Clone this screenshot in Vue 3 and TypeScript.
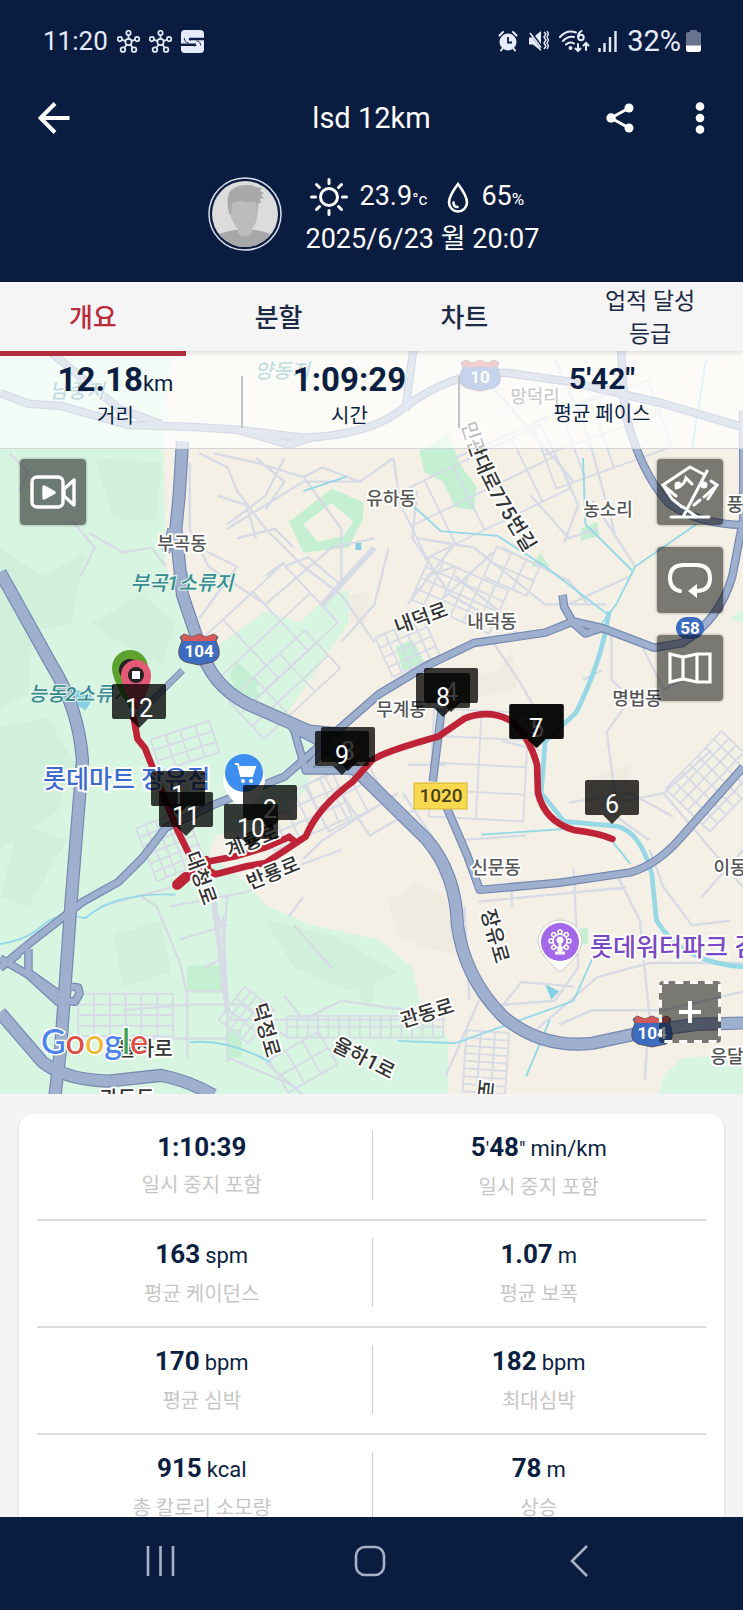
<script setup lang="ts">
import { ref } from 'vue'

interface Label { t: string; x: number; y: number; r?: number; k: string }
interface Marker { n: number; x: number; y: number }
interface Patch { x: number; y: number; w: number; h: number; a: number; c: number; r: number }
interface Metric { value: string; unit: string; label: string }

const active = ref(0)
const tabs = ['개요', '분할', '차트', '업적 달성 등급']

const rows: Metric[][] = [
  [{ value: '1:10:39', unit: '', label: '일시 중지 포함' }, { value: `5'48"`, unit: 'min/km', label: '일시 중지 포함' }],
  [{ value: '163', unit: 'spm', label: '평균 케이던스' }, { value: '1.07', unit: 'm', label: '평균 보폭' }],
  [{ value: '170', unit: 'bpm', label: '평균 심박' }, { value: '182', unit: 'bpm', label: '최대심박' }],
  [{ value: '915', unit: 'kcal', label: '총 칼로리 소모량' }, { value: '78', unit: 'm', label: '상승' }],
]

const labels: Label[] = [
  { t: '남중지', x: 77, y: 47, k: 'water' },
  { t: '양동지', x: 282, y: 27, k: 'water' },
  { t: '망덕리', x: 535, y: 52, k: 'town' },
  { t: '유하동', x: 391, y: 154, k: 'town' },
  { t: '농소리', x: 608, y: 165, k: 'town' },
  { t: '풍', x: 735, y: 160, k: 'town' },
  { t: '부곡동', x: 182, y: 199, k: 'town' },
  { t: '부곡1소류지', x: 182, y: 239, k: 'water' },
  { t: '내덕동', x: 492, y: 277, k: 'town' },
  { t: '무계동', x: 401, y: 365, k: 'town' },
  { t: '명법동', x: 637, y: 354, k: 'town' },
  { t: '능동2소류지', x: 80, y: 350, k: 'water' },
  { t: '이동', x: 730, y: 523, k: 'town' },
  { t: '신문동', x: 496, y: 523, k: 'town' },
  { t: '응달', x: 727, y: 712, k: 'town' },
  { t: '내덕로', x: 421, y: 267, r: -20, k: 'road' },
  { t: '장유로', x: 495, y: 585, r: 74, k: 'road' },
  { t: '관동로', x: 427, y: 662, r: -17, k: 'road' },
  { t: '율하1로', x: 364, y: 707, r: 27, k: 'road' },
  { t: '덕정로', x: 266, y: 679, r: 74, k: 'road' },
  { t: '율하로', x: 145, y: 698, r: 0, k: 'road' },
  { t: '계룡로', x: 252, y: 490, r: -22, k: 'road' },
  { t: '반룡로', x: 273, y: 522, r: -22, k: 'road' },
  { t: '대청로', x: 201, y: 527, r: 70, k: 'road' },
  { t: '관동동', x: 127, y: 748, r: 0, k: 'road' },
  { t: '로대', x: 484, y: 747, r: 96, k: 'road' },
]

const markers: Marker[] = [
  { n: 1, x: 151, y: 420 }, { n: 2, x: 243, y: 434 }, { n: 3, x: 321, y: 376 },
  { n: 4, x: 424, y: 317 }, { n: 5, x: 510, y: 353 }, { n: 6, x: 585, y: 429 },
  { n: 7, x: 509, y: 353 }, { n: 8, x: 416, y: 322 }, { n: 9, x: 315, y: 380 },
  { n: 10, x: 224, y: 453 }, { n: 11, x: 159, y: 441 }, { n: 12, x: 112, y: 333 },
]

const patches: Patch[] = [
  { x: 560, y: 625, w: 260, h: 170, a: -43, c: 3, r: 2 },
  { x: 600, y: 730, w: 220, h: 110, a: -43, c: 3, r: 3 },
  { x: 390, y: 860, w: 130, h: 70, a: -18, c: 4, r: 3 },
  { x: 360, y: 1070, w: 110, h: 120, a: -22, c: 5, r: 6 },
  { x: 265, y: 1430, w: 200, h: 90, a: 0, c: 6, r: 4 },
  { x: 520, y: 1430, w: 80, h: 90, a: 38, c: 5, r: 3 },
  { x: 770, y: 1455, w: 330, h: 46, a: 0, c: 15, r: 2 },
  { x: 1025, y: 1530, w: 90, h: 130, a: 4, c: 3, r: 8 },
  { x: 1510, y: 935, w: 170, h: 130, a: -46, c: 7, r: 6 },
  { x: 1020, y: 320, w: 340, h: 150, a: -26, c: 5, r: 2 },
  { x: 1270, y: 200, w: 260, h: 150, a: -20, c: 4, r: 2 },
  { x: 1010, y: 900, w: 200, h: 230, a: 3, c: 2, r: 4 },
  { x: 860, y: 650, w: 110, h: 90, a: -24, c: 5, r: 4 },
  { x: 970, y: 540, w: 180, h: 100, a: 24, c: 6, r: 4 },
  { x: 1080, y: 490, w: 100, h: 70, a: 24, c: 3, r: 2 },
  { x: 640, y: 1000, w: 180, h: 100, a: -24, c: 6, r: 3 },
  { x: 730, y: 960, w: 140, h: 110, a: -28, c: 3, r: 2 },
  { x: 640, y: 1530, w: 120, h: 80, a: -30, c: 3, r: 2 },
]

function grid(p: Patch): string {
  let d = ''
  for (let i = 0; i <= p.c; i++) {
    const x = Math.round(-p.w / 2 + (p.w * i) / p.c)
    d += `M${x} ${-p.h / 2}v${p.h}`
  }
  for (let i = 0; i <= p.r; i++) {
    const y = Math.round(-p.h / 2 + (p.h * i) / p.r)
    d += `M${-p.w / 2} ${y}h${p.w}`
  }
  return d
}

const highways = [
  'M385 215 378 330 371 400 385 540 422 650Q445 730 520 770L650 828 760 920 900 1058Q962 1130 965 1240 980 1350 1060 1432 1140 1502 1250 1490L1380 1462 1470 1450 1568 1447',
  'M0 492 110 690Q166 780 174 890L150 1190 128 1500 116 1600',
  'M0 1425 90 1530Q140 1568 230 1570L340 1558Q400 1570 450 1600',
]
const trunks = [
  'M0 1330 60 1280 175 1190 250 1148 300 1098 350 1033 450 985 600 925 720 820 800 750 900 690 1000 642 1150 620 1210 596 1270 610 1380 652 1440 642Q1520 590 1545 500L1568 380',
  'M1187 540 1190 565 1210 600M1210 600 1235 622 1270 610',
  'M0 112 60 135 130 140 270 180 400 184 500 190 640 207Q780 202 850 145 960 62 1070 70L1200 88 1400 135 1568 185',
  'M110 28 250 145 340 178M500 190 610 222 660 206',
  'M1310 20 1318 150Q1350 280 1410 345 1470 390 1568 392V150',
  'M872 20 855 150',
  'M932 780 913 935M350 450 362 400',
  'M940 985 985 1090 1012 1165 1180 1150 1330 1128Q1390 1110 1440 1050L1568 905',
  'M0 1310 60 1345 125 1405M0 1330 40 1300M60 1290 60 1340 130 1390M150 1370 165 1372 168 1385 158 1402 135 1400',
  'M610 820 720 830M620 825 645 912 760 912M645 912 690 860 620 825',
]
const streets = 'M420 240 480 270 500 320 560 400 640 480 720 540 790 640M400 260 400 400 440 480 560 560M450 240 540 260 640 290 680 270 760 300 830 250M400 430 500 480 420 590M480 400 640 300 760 300M600 250 560 330 480 390M830 250 840 320 880 360M640 290 720 400 720 520M560 560 700 440 790 420M820 440 790 560 720 640M880 320 870 420 950 540 1090 620M880 420 1000 440 1150 560 1280 560M860 560 960 430M900 580 1040 450M1060 440 1200 510 1240 560M1120 330 1200 420 1260 400M1180 260 1220 350 1190 430M1170 40 1240 200 1300 420M960 250 1300 100M1040 100 1210 300M1200 560 1330 500M1250 340 1340 480M1040 640 1100 730 1140 800M1290 620 1290 720 1330 760 1280 830 1300 980 1400 960 1500 870M1350 640 1400 740 1440 720M1200 980 1330 960 1420 1010M1300 1010 1370 1060M1370 1080 1400 1160 1460 1240 1540 1230M1400 960 1568 1160M1480 1180 1568 1080M1210 1120 1220 1330 1170 1400 1040 1410M1080 1160V1200M1010 1190 1320 1160M1300 1130 1350 1230 1370 1430 1360 1568M980 1200 990 1400M1060 1410 1100 1360 1210 1370M1110 1480 1260 1350 1370 1320 1568 1320M1180 1450 1250 1420 1400 1420 1568 1380M470 1220 480 1420V1530M470 1250 420 1110M300 1180 330 1200 380 1320 395 1390V1520M395 1380H480M260 1420 395 1408H510L610 1480M220 1480H480M480 1440H940M480 1520 620 1580M360 1200 520 1170 640 1110 720 1080M380 1270 480 1240M210 1200 360 1160M480 1180 470 1280M720 960 780 1050 900 980M640 1100 680 1060 840 960M610 1220 640 1180M860 900H940M850 960 930 1080M960 1060 1110 1050M150 380 200 440 170 500M190 410 260 450 320 440 350 480M20 240 60 280 40 320M620 1240 700 1330M940 1560 1010 1400M560 1530 640 1600M540 250 600 300 560 360M460 330 520 350 540 420M500 420 580 400 620 440M600 480 650 460 720 520M560 500 600 470M960 500 1060 580M900 500 960 480M1060 850 1140 870M1230 720 1270 700M960 1200 960 1180M600 1390 640 1440 720 1400 860 1420M430 1330 470 1310'
</script>

<template>
  <div class="app">
    <header class="head">
      <div class="status">
        <div class="side">
          <span class="clock">11:20</span>
          <svg v-for="i in 2" :key="i" class="hub" viewBox="0 0 24 24" fill="none" stroke="#e6ebfa" stroke-width="1.800">
            <circle cx="12" cy="12.500" r="3.300" /><circle cx="12" cy="3" r="2.300" /><circle cx="3" cy="9.500" r="2.300" /><circle cx="21" cy="9.500" r="2.300" /><circle cx="6.200" cy="20.500" r="2.400" /><circle cx="17.800" cy="20.500" r="2.400" />
            <path d="M12 5.300v3.900M5.200 10.200l3.700 1.200M18.800 10.200l-3.700 1.200M7.600 18.500l2.400-3.200M16.400 18.500 14 15.300" />
          </svg>
          <svg class="hub" viewBox="0 0 24 24"><rect width="24" height="24" rx="4" fill="#e6ebfa" /><path d="M24 9.500H10M0 15.500H14" stroke="#0a1d40" stroke-width="2.600" /><path d="M10 8.200 8.800 9.500 10.200 10.800M14 14.200l1.200 1.300-1.400 1.300" fill="none" stroke="#0a1d40" stroke-width="1.500" /><path d="M3.500 8.500Q3.500 13 8 13.500M20.500 16Q20.500 12 16 11.300" fill="none" stroke="#0a1d40" stroke-width="1" /></svg>
        </div>
        <div class="side right">
          <svg width="20" height="22" viewBox="0 0 20 22"><g fill="none" stroke="#e6ebfa" stroke-width="2" stroke-linecap="round"><path d="M1.500 5.500 5 2M18.500 5.500 15 2M4.500 18.500 3 20.500M15.500 18.500l1.500 2" /></g><circle cx="10" cy="12" r="8.500" fill="#e6ebfa" /><path d="M10 7v5.500h4" fill="none" stroke="#0a1d40" stroke-width="1.800" /></svg>
          <svg width="21" height="22" viewBox="0 0 21 22" fill="#e6ebfa"><path d="M1 7.500h4L13 1v20l-8-6.500H1z" /><path d="M2 1.500 14 18" stroke="#0a1d40" stroke-width="3" /><path d="m2 3 11 14.500" stroke="#e6ebfa" stroke-width="1.600" /><path d="m16 2 2 2-2 3 2 3-2 3 2 3-2 3M19 1l1.500 3L19 7l1.500 3L19 13l1.500 3L19 19" fill="none" stroke="#e6ebfa" stroke-width="1.400" /></svg>
          <svg width="31" height="23" viewBox="0 0 31 23" fill="none" stroke="#e6ebfa" stroke-width="2" stroke-linecap="round"><path d="M1 7Q8-1 17 2.500M4 11q5-5.500 11-4M7 14.500q4-3.500 8-1" /><circle cx="11.500" cy="18" r="1" fill="#e6ebfa" /><path d="M22.500 1q-3.500 2-3.500 6" /><circle cx="22" cy="7.500" r="2.700" /><path d="M19 14v7m-2.500-2.500L19 21l2.500-2.500M27 20v-7m-2.500 2.500L27 13l2.500 2.500" /></svg>
          <svg class="signal" width="19" height="22" viewBox="0 0 19 22" stroke="#e6ebfa" stroke-width="2.400"><path d="M1.500 22v-4M6.500 22v-9M12 22V7" /><path d="M17.500 22V1" /></svg>
          <span class="battery">32%</span>
          <svg class="cell" width="15" height="22" viewBox="0 0 15 22"><path d="M4 0h7v2h2q2 0 2 2v15q0 3-2.500 3h-10Q0 22 0 19V4q0-2 2-2h2z" fill="#68738e" /><path d="M0 15.500h15V19q0 3-2.500 3h-10Q0 22 0 19z" fill="#fff" /></svg>
        </div>
      </div>
      <div class="bar">
        <button class="plain" aria-label="뒤로"><svg width="32" height="32" viewBox="0 0 32 32" fill="none" stroke="#fff" stroke-width="4"><path d="M17 1.500 2.500 16 17 30.500M3 16h28.500" /></svg></button>
        <h1>lsd 12km</h1>
        <div class="tools">
          <button class="plain" aria-label="공유"><svg width="28" height="30" viewBox="0 0 28 30" fill="#fff"><path d="M23 5 5 15l18 10" fill="none" stroke="#fff" stroke-width="3" /><circle cx="23" cy="5" r="4.500" /><circle cx="5" cy="15" r="4.700" /><circle cx="23" cy="25" r="4.500" /></svg></button>
          <button class="plain" aria-label="더보기"><svg width="10" height="32" viewBox="0 0 10 32" fill="#fff"><circle cx="5" cy="4.500" r="4.300" /><circle cx="5" cy="16" r="4.300" /><circle cx="5" cy="27.500" r="4.300" /></svg></button>
        </div>
      </div>
      <div class="profile">
        <svg width="74" height="74" viewBox="0 0 74 74">
          <defs><clipPath id="face"><circle cx="37" cy="37" r="33" /></clipPath></defs>
          <circle cx="37" cy="37" r="36" fill="none" stroke="#d9dfec" stroke-width="1.500" />
          <g clip-path="url(#face)"><path fill="#dcdcdc" d="M0 0h74v74H0z" /><path fill="#a7a7a7" d="M4 74V60q8-4 22-7h22q14 3 22 7v14z" /><path fill="#bcbcbc" d="M22 22h28v14q-2 12-6 16v5q-7 5-14 0v-5q-5-4-8-16z" /><path fill="#a9a9a9" d="M21 36q-3-12 0-20Q26 8 38 8q8 0 10 2l6 1-2 3 4 2-3 2 3 3-4 1 1 4q-3-1-3 3v7l-2-11q-10 1-14-1l-10 2-1 12z" /></g>
        </svg>
        <div class="meta">
          <div class="weather">
            <svg width="38" height="38" viewBox="0 0 38 38" fill="none" stroke="#fff" stroke-width="3"><circle cx="19" cy="19" r="8.500" /><path stroke-linecap="round" d="M19 1.500v4M19 32.500v4M1.500 19h4M32.500 19h4M6.500 6.500l3 3M28.500 28.500l3 3M31.500 6.500l-3 3M9.500 28.500l-3 3" /></svg>
            <span>23.9<small>°c</small></span>
            <svg width="22" height="33" viewBox="0 0 22 33" fill="none" stroke="#fff" stroke-width="2.600"><path d="M11 3Q2 15 2 21.500a9 9 0 0 0 18 0Q20 15 11 3z" /><path d="M6.500 21.500q0 4.500 4 4.500" stroke-linecap="round" /></svg>
            <span>65<small>%</small></span>
          </div>
          <time datetime="2025-06-23T20:07">2025/6/23 월 20:07</time>
        </div>
      </div>
    </header>

    <nav class="tabs">
      <button v-for="(t, i) in tabs" :key="t" :class="['tab', { on: active === i, small: i === 3 }]" @click="active = i"><span>{{ t }}</span></button>
    </nav>

    <main>
      <section class="map">
        <svg class="canvas" viewBox="0 0 743 743" preserveAspectRatio="xMidYMid slice">
          <rect width="743" height="743" fill="#d8f5e2" />
          <g transform="translate(0 -11) scale(.474 .472)">
            <g fill="#d0f0dc">
              <path d="M0 440 90 500 180 450 150 600 60 620 0 720zM200 250 340 260 330 380 240 380zM190 600 300 540 370 600 340 690 250 640z" /><path d="M0 820 100 800 160 900 120 1000 0 1080zM240 1260 340 1230 360 1340 260 1370zM40 1020 140 1060 60 1200 0 1180z" /><path d="M560 1230 700 1260 840 1340 740 1380 620 1330zM700 1300 800 1330 780 1420zM0 560 70 600 60 750 0 780z" />
            </g>
            <path fill="#f4f0e5" d="M362 20 345 235 350 480 400 620 450 655 560 575 640 600 690 540 735 530 735 600 640 740 600 800 690 850 640 960 560 1030 455 1050 440 1090 520 1150 565 1200 660 1240 800 1270 870 1330 890 1420 945 1480 945 1600H1568V20z" />
            <g fill="#efebe1"><path d="M960 720 1050 700 1080 660 1090 740 1000 760zM820 1190 880 1150 940 1180 960 1300 900 1290 840 1260zM1240 930 1330 900 1330 960 1250 1000zM740 540 780 530 770 600 740 600z" /></g>
            <g fill="#c4efd2">
              <path fill-rule="evenodd" d="M700 315 768 345 765 380 735 440 640 450 610 385zM700 345 640 390 670 428 725 415 745 385z" /><path d="M885 235 945 200 975 270 1005 310 1000 360 960 355 935 300 895 280zM835 650 870 635 900 690 850 700zM1225 400 1260 385 1265 415 1225 425zM485 710 500 680 560 740 540 760 500 750zM395 1325H470V1380H395zM483 1460H510V1520H483zM1225 1245H1240V1280H1225zM1120 480 1140 450 1160 480z" />
            </g>
            <path fill="#d8f5e2" d="M640 590 690 545 735 530 740 570 600 760 640 730 590 800 540 740zM1400 1560 1440 1520 1568 1515V1600H1390zM1540 590 1568 570V600zM0 20H360L350 200 0 180z" />
            <g fill="#86cfe3"><path d="M365 495 395 490 400 510 380 525zM155 740 195 750 190 770 180 785 165 775zM1150 1365 1180 1380 1163 1397zM750 430h12v15h-12z" /></g>
            <g fill="none" stroke="#d6dbe5" stroke-width="5">
              <path :d="streets" />
              <path v-for="(p, i) in patches" :key="i" :d="grid(p)" :transform="`translate(${p.x} ${p.y}) rotate(${p.a})`" stroke-width="4" />
              <path d="M450 1180 480 1420M680 560 790 440" stroke-width="12" />
            </g>
            <g fill="none" stroke="#96d8e6" stroke-width="4">
              <path d="M1230 250 1235 390 1335 490 1300 560M1470 390 1340 480 1300 560 1270 600M1016 1048 1190 1036M870 350 930 405 1050 415 1150 480 1280 580M0 1280Q60 1270 90 1240T180 1225Q240 1170 370 1175M400 1488Q480 1480 570 1530M1250 1310 1210 1400 1100 1440 960 1490 840 1485M1160 1440 1110 1560M640 320 730 290M1290 1060 1330 1110M1490 40 1460 230" />
              <path stroke-width="10" d="M1285 575Q1270 680 1215 790L1150 850 1142 960 1190 1020 1300 1030Q1350 1040 1375 1130L1385 1230Q1440 1320 1568 1328" />
            </g>
            <g fill="none" stroke-linejoin="round">
              <g stroke="#7588b2"><path v-for="d in trunks" :key="d" :d="d" stroke-width="18" /><path v-for="d in highways" :key="d" :d="d" stroke-width="28" /><path d="M290 795 385 700" stroke-width="14" /></g>
              <g stroke="#9fafce"><path v-for="d in trunks" :key="d" :d="d" stroke-width="13" /><path v-for="d in highways" :key="d" :d="d" stroke-width="23" /><path d="M290 795 385 700" stroke-width="10" /></g>
            </g>
            <g fill="none" stroke="#be2338" stroke-width="14" stroke-linecap="round" stroke-linejoin="round">
              <path d="M282 800 290 845 306 865 345 965 375 1040 410 1112 440 1105 500 1093 560 1075 610 1053" />
              <path d="M395 1135 430 1118 455 1132 520 1115 560 1108 600 1082 645 1052Q670 990 745 935L785 890Q810 872 925 840L980 802Q1030 782 1075 805 1115 835 1133 900L1135 960Q1150 1020 1210 1038 1265 1045 1292 1057M435 1100 440 1125M610 1053 625 1065" />
              <path d="M374 1154 392 1138" stroke-width="22" />
            </g>
          </g>

          <g text-anchor="middle" paint-order="stroke" stroke="#fff" stroke-width="4" stroke-linejoin="round">
            <text v-for="l in labels" :key="l.t" :class="l.k" :x="l.r === undefined ? l.x : 0" :y="l.r === undefined ? l.y : 7" :transform="l.r === undefined ? undefined : `translate(${l.x} ${l.y}) rotate(${l.r})`">{{ l.t }}</text>
          </g>
          <path id="street-775" d="M461 73Q476 122 496 154L533 215" fill="none" />
          <g paint-order="stroke" stroke="#fff" stroke-width="4" stroke-linejoin="round">
            <text class="road"><textPath href="#street-775">민관대로775번길</textPath></text>
            <text class="poi shop" x="43" y="437">롯데마트 장유점</text>
            <text class="poi fun" x="590" y="605">롯데워터파크 김해</text>
          </g>

          <g text-anchor="middle">
            <g v-for="s in [{ x: 480, y: 25, n: '10' }, { x: 199, y: 299, n: '104' }, { x: 652, y: 681, n: '104' }]" :key="s.x" :transform="`translate(${s.x} ${s.y})`">
              <path d="M-19-13-15-16-7-13 0-16 7-13 15-16 19-13 17-9Q25 7 14 12L0 15-14 12Q-25 7-17-9z" fill="#3d6cc0" stroke="#5b5060" /><path d="M-18-13-15-16-7-13 0-16 7-13 15-16 18-13 16-9H-16z" fill="#d25a58" />
              <text class="shield" y="7">{{ s.n }}</text>
            </g>
            <rect x="676" y="266" width="28" height="22" rx="11" fill="#3d6cc0" /><text class="shield" x="690" y="283">58</text>
            <rect x="414" y="432" width="53" height="26" fill="#f9d94f" stroke="#d8b530" /><text class="route" x="441" y="451">1020</text>
          </g>

          <g>
            <path d="M244 459Q225 446 223 430A21 21 0 1 1 265 430Q263 446 244 459z" fill="#fff" /><circle cx="244" cy="422" r="19" fill="#3e8ef0" />
            <path d="M235 413h3l3 12h11l3-9h-15" fill="none" stroke="#fff" stroke-width="2" /><path d="M239 416h16l-3 9h-11z" fill="#fff" /><circle cx="243" cy="430" r="2" fill="#fff" /><circle cx="251" cy="430" r="2" fill="#fff" />
            <path d="M560 621Q539 604 538 591A22 22 0 1 1 582 591Q581 604 560 621z" fill="#fff" stroke="#ccc" /><circle cx="560" cy="591" r="19" fill="#a367ea" />
            <g fill="none" stroke="#fff" stroke-width="1.500"><circle cx="560" cy="590" r="7" /><circle v-for="a in 8" :key="a" cx="560" cy="581" r="2" :transform="`rotate(${a * 45} 560 590)`" fill="#a367ea" /><path d="M560 590v11M555 602h10" stroke-width="3" /></g><circle cx="560" cy="589" r="3.500" fill="#fff" />
          </g>

          <path d="M130 358Q112 330 112 317A18 18 0 1 1 148 317Q148 330 130 358z" fill="#5da22c" /><circle cx="130" cy="319" r="11" fill="#222" />
          <path d="M137 360Q121 337 121 324A15 15 0 1 1 151 324Q151 337 137 360z" fill="#e45a76" /><circle cx="136" cy="324" r="8" fill="#222" /><rect x="132" y="320" width="8" height="8" fill="#fff" />
          <g v-for="m in markers" :key="m.n" :transform="`translate(${m.x} ${m.y})`">
            <path d="M2 0H52Q54 0 54 2V33Q54 35 52 35H36L27 44 18 35H2Q0 35 0 33V2Q0 0 2 0z" fill="#000" fill-opacity=".77" />
            <text class="km" x="27" y="33" text-anchor="middle">{{ m.n }}</text>
          </g>
          <text class="google" x="41" y="703" paint-order="stroke" stroke="#fff" stroke-width="3"><tspan fill="#4d83ec">G</tspan><tspan fill="#dc5144">o</tspan><tspan fill="#efb839">o</tspan><tspan fill="#4d83ec">g</tspan><tspan fill="#3fa35b">l</tspan><tspan fill="#dc5144">e</tspan></text>
        </svg>

        <div class="summary">
          <div class="stat first"><p class="num">12.18<small>km</small></p><p class="cap">거리</p></div>
          <div class="stat"><p class="num">1:09:29</p><p class="cap">시간</p></div>
          <div class="stat pace"><p class="num">5'42"</p><p class="cap">평균 페이스</p></div>
        </div>

        <button class="tile video" aria-label="동영상"><svg width="46" height="34" viewBox="0 0 46 34" fill="none" stroke="#fff" stroke-width="3.400" stroke-linejoin="round"><rect x="2" y="2" width="31" height="30" rx="5" /><path d="M34 14 44 5v25l-10-9z" /><path d="M14 12v11l10-5.500z" fill="#fff" /></svg></button>
        <div class="stack">
          <button class="tile" aria-label="지도 숨기기"><svg width="58" height="56" viewBox="0 0 58 56" fill="none" stroke="#fff" stroke-width="3" stroke-linecap="round"><path d="M29 3 2 21l13 11M29 3l15 8M50 17l6 4-13 12M2 21l9 14 10 8M56 21l-9 14M39 36l-6 5M10 53h38M22 53 46 7M22 43l14 10M15 24q8-2 10-10l6 6" /><circle cx="17" cy="21" r="3.500" fill="#fff" stroke="none" /><circle cx="43" cy="21" r="3.500" fill="#fff" stroke="none" /></svg></button>
          <button class="tile" aria-label="경로 재생"><svg width="46" height="36" viewBox="0 0 46 36" fill="none" stroke="#fff" stroke-width="4" stroke-linecap="round"><path d="M13 29Q3 27 3 16 3 3 17 3H29Q43 3 43 16 43 29 29 29" /><path d="m21 29 9-7v14z" fill="#fff" stroke="none" /></svg></button>
          <button class="tile" aria-label="지도 유형"><svg width="44" height="34" viewBox="0 0 44 34" fill="none" stroke="#fff" stroke-width="3.200"><path d="M2 3 15 6 29 3 42 3V31H29L15 28 2 31zM15 6v22M29 3v28" /></svg></button>
        </div>
        <button class="tile plus" aria-label="추가"><svg width="62" height="62" viewBox="0 0 62 62" fill="none" stroke="#fff"><rect x="1.500" y="1.500" width="59" height="59" rx="3" stroke-width="3" stroke-dasharray="8 6.750" stroke-dashoffset="3" /><path d="M31 20v22M20 31h22" stroke-width="4" /></svg></button>
      </section>

      <section class="card">
        <div v-for="(r, i) in rows" :key="i" class="row">
          <div v-for="(m, j) in r" :key="j" class="metric">
            <p class="val"><template v-if="m.unit === 'min/km'">5<i>'</i>48<i>"</i></template><template v-else>{{ m.value }}</template><span v-if="m.unit">{{ m.unit }}</span></p>
            <p class="name">{{ m.label }}</p>
          </div>
        </div>
      </section>
    </main>

    <footer class="nav">
      <button class="plain" aria-label="최근 앱"><svg width="30" height="30" viewBox="0 0 30 30" stroke="#a9b1c6" stroke-width="2.600"><path d="M2 0v30M14.500 0v30M27 0v30" /></svg></button>
      <button class="plain" aria-label="홈"><svg width="32" height="32" viewBox="0 0 32 32" fill="none" stroke="#a9b1c6" stroke-width="2.600"><rect x="2" y="2" width="28" height="28" rx="9" /></svg></button>
      <button class="plain" aria-label="이전"><svg width="18" height="32" viewBox="0 0 18 32" fill="none" stroke="#a9b1c6" stroke-width="2.600"><path d="M17 1 2 16l15 15" /></svg></button>
    </footer>
  </div>
</template>

<style>
body { margin: 0; }
</style>

<style scoped>
.app { display: flex; flex-direction: column; height: 100vh; overflow: hidden; background: #f4f4f4; color: #0c1f42; font-family: Roboto, "Noto Sans CJK KR", sans-serif; }
p, h1 { margin: 0; font-weight: 400; }
svg { display: block; flex: none; }
button { font: inherit; color: inherit; border: 0; background: none; padding: 0; cursor: pointer; }
.plain { display: grid; place-items: center; }
.head { flex: none; background: #0a1d40; color: #fff; }
.status { display: flex; justify-content: space-between; align-items: center; height: 82px; padding: 0 42px 0 43px; color: #e6ebfa; }
.side { display: flex; align-items: center; gap: 9px; }
.right { gap: 10px; }
.clock { font-size: 26px; }
.hub { width: 23px; height: 23px; }
.signal { margin-left: -2px; }
.battery { font-size: 29px; }
.cell { margin-left: -5px; }
.bar { display: grid; grid-template-columns: 1fr auto 1fr; align-items: center; height: 72px; padding: 0 38px; }
.bar > .plain { justify-self: start; }
.bar h1 { font-size: 29px; line-height: 36px; }
.tools { display: flex; justify-content: flex-end; align-items: center; gap: 61px; }
.profile { display: flex; justify-content: center; align-items: center; gap: 24px; height: 120px; padding-bottom: 8px; }
.profile > svg { margin-left: 4px; }
.meta { padding-top: 8px; font-size: 27px; line-height: 42px; }
.weather { display: flex; align-items: center; height: 42px; gap: 12px; padding-left: 4px; }
.weather span { margin-right: 8px; }
.weather small { font-size: 17px; }
.meta time { display: block; }

.tabs { display: grid; grid-template-columns: repeat(4, 1fr); flex: none; height: 69px; background: #f5f5f5; position: relative; box-shadow: 0 2px 4px rgba(0, 0, 0, .12); z-index: 1; }
.tab { display: flex; align-items: center; justify-content: center; border-bottom: 5px solid transparent; border-top: 3px solid transparent; font-size: 26px; line-height: 33px; font-weight: 500; color: #1c2a45; }
.tab.on { color: #b92c3e; border-bottom-color: #b22d3d; }
.tab.small { font-size: 23px; font-weight: 400; }
.tab.small span { max-width: 110px; }

main { flex: 1; min-height: 0; overflow: hidden; }
.map { position: relative; aspect-ratio: 1; overflow: hidden; }
.canvas { width: 100%; height: 100%; }
.town { font-size: 18px; fill: #555; font-weight: 500; }
.road { font-size: 20px; fill: #333; font-weight: 500; }
.water { font-size: 20px; fill: #3a8a92; font-weight: 500; font-style: italic; stroke: #e3f7ea; stroke-width: 2; }
.poi { font-size: 25px; font-weight: 500; }
.shop { fill: #3c6bd0; }
.fun { fill: #7a48c4; }
.shield { font-size: 17px; font-weight: 700; fill: #fff; }
.route { font-size: 19px; font-weight: 500; fill: #4b4115; }
.km { font-size: 25px; fill: #fff; }
.google { font-family: Lato, sans-serif; font-size: 34px; font-weight: 500; }

.summary { position: absolute; inset: 0 0 auto; display: grid; grid-template-columns: 241fr 217fr 285fr; height: 97px; background: rgba(255, 255, 255, .7); border-bottom: 1px solid #d3d6d8; text-align: center; }
.stat { position: relative; padding-top: 9px; }
.stat.first { padding-right: 10px; }
.stat.pace { padding-left: 3px; }
.stat + .stat::before { content: ""; position: absolute; left: 0; top: 25px; height: 52px; width: 2px; background: #c0c4cb; }
.num { font-size: 33px; line-height: 40px; font-weight: 700; }
.num small { font-size: 22px; line-height: 20px; font-weight: 400; }
.cap { font-size: 20px; line-height: 32px; }
.pace .num { font-size: 30px; line-height: 38px; }
.tile { display: grid; place-items: center; width: 66px; height: 66px; background: rgba(0, 0, 0, .5); border-radius: 4px; box-shadow: 0 0 3px rgba(0, 0, 0, .4); }
.video { position: absolute; left: 20px; top: 108px; }
.stack { position: absolute; right: 20px; top: 108px; display: grid; gap: 22px; }
.plus { position: absolute; right: 22px; bottom: 51px; width: 62px; height: 62px; box-shadow: none; }

.card { margin: 20px 19px 0; padding: 0 18px; background: #fff; border-radius: 14px; box-shadow: 0 1px 3px rgba(0, 0, 0, .15); }
.row { display: grid; grid-template-columns: 1fr 1fr; height: 105px; border-bottom: 2px solid #dcdcdc; text-align: center; }
.row:last-child { border-bottom: 0; }
.metric { position: relative; padding-top: 15px; }
.metric:first-child { padding-right: 5px; }
.metric + .metric::before { content: ""; position: absolute; left: 0; top: 17px; width: 1px; height: 69px; background: #cfcfcf; }
.val { font-size: 26px; line-height: 36px; font-weight: 700; }
.val span { font-size: 22px; font-weight: 400; margin-left: 5px; }
.val i { font-size: 20px; font-weight: 400; font-style: normal; }
.name { font-size: 20px; line-height: 30px; margin-top: 5px; color: #c6c6c6; }

.nav { flex: none; display: grid; grid-template-columns: repeat(3, 1fr); height: 93px; padding: 0 60px 6px 56px; box-sizing: border-box; background: #0a1d40; }
</style>
